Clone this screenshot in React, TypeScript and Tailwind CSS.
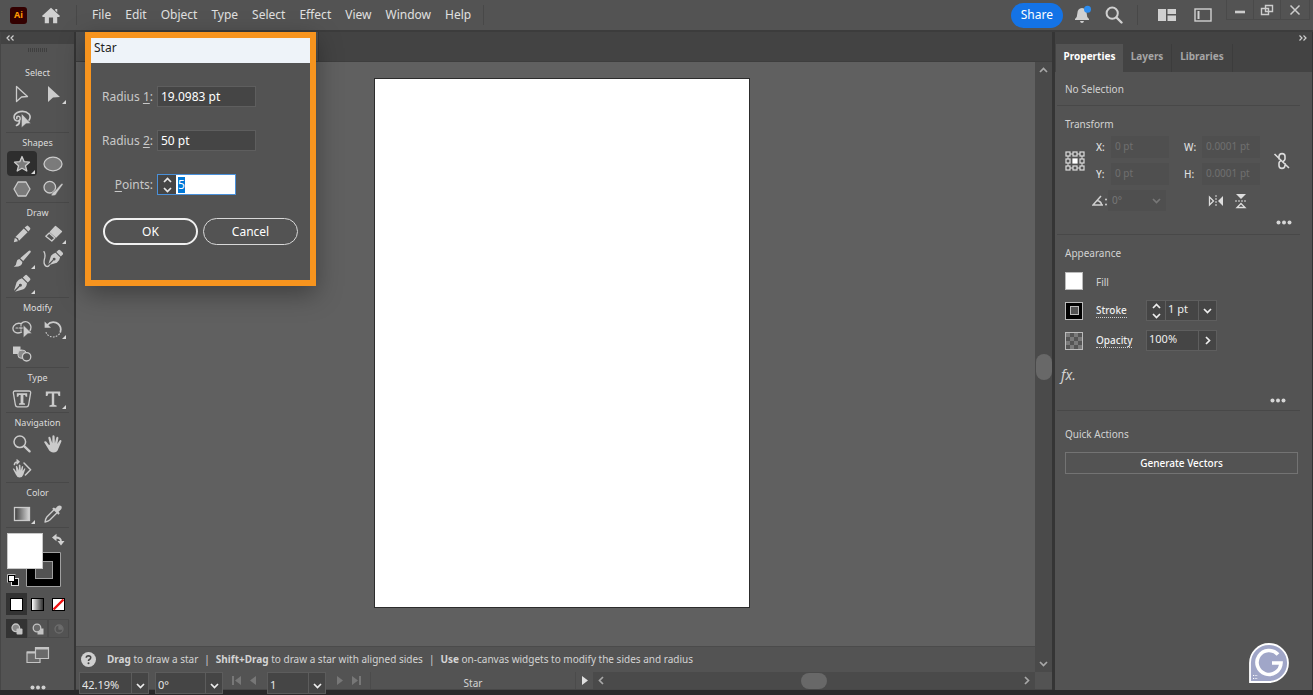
import { useEffect, useRef } from "react";
import type { ReactNode } from "react";

type IconProps = { children: ReactNode; size?: string; box?: string };

function Icon({ children, size = "size-5", box = "0 0 20 20" }: IconProps) {
  return (
    <svg
      viewBox={box}
      className={`${size} shrink-0`}
      fill="none"
      stroke="currentColor"
      strokeWidth="1.3"
      strokeLinejoin="round"
      strokeLinecap="round"
      aria-hidden="true"
    >
      {children}
    </svg>
  );
}

function Chevron({ dir, className = "" }: { dir: "up" | "down" | "left" | "right"; className?: string }) {
  const paths = {
    up: "M2 7 L5.5 3.5 L9 7",
    down: "M2 4 L5.5 7.5 L9 4",
    left: "M7 2 L3.5 5.5 L7 9",
    right: "M4 2 L7.5 5.5 L4 9",
  };
  return (
    <svg viewBox="0 0 11 11" className={`size-[11px] shrink-0 ${className}`} fill="none" stroke="currentColor" strokeWidth="1.7" aria-hidden="true">
      <path d={paths[dir]} />
    </svg>
  );
}

const nib = (
  <path d="M10.8 3.4 L13.2 1.2 Q14.2 .4 15.2 1.4 L18 4.2 Q18.9 5.2 18 6.2 L15.8 8.4 Z M9.9 4.2 L15 9.2 Q14.6 13.2 11.4 15.2 L3 17.8 L8 12.6 A1.5 1.5 0 1 0 7 11.6 L2 16.800 L4.600 8.200 Q6.400 5 9.900 4.200 Z" fill="currentColor" stroke="none" />
);

const tools = [
  {
    label: "Select",
    items: [
      { name: "Selection", icon: <path d="M4.500 2.500 L15.500 12.500 L9.500 13 L4.500 17.500 Z" /> },
      { name: "Direct Selection", more: true, icon: <path d="M5 2 L17 13 L10 13.400 L5 18 Z" fill="currentColor" stroke="none" /> },
      {
        name: "Lasso",
        icon: (
          <>
            <path d="M16.500 12 Q19.500 8 17 5 Q13.500 1.500 8 2.600 Q2 4 2 8.500 Q2.500 12 6 12 Q8.300 11.600 8.300 9.200 Q8 7 6 7.200 Q4.300 7.700 4.800 9.600 M7.500 11.500 Q8 15 4.500 16.500" strokeWidth="1.600" />
            <path d="M9.500 4.500 L19 14.500 L14 14.800 L9.500 18.800 Z" fill="currentColor" stroke="#535353" strokeWidth=".6" />
          </>
        ),
      },
    ],
  },
  {
    label: "Shapes",
    items: [
      { name: "Star", more: true, active: true, icon: <path d="M10 2.500 L12.200 7.700 L17.500 8.200 L13.500 11.800 L14.800 17 L10 14.200 L5.200 17 L6.500 11.800 L2.500 8.200 L7.800 7.700 Z" fill="#7b7b7b" /> },
      { name: "Ellipse", icon: <ellipse cx="10" cy="10" rx="9" ry="6.800" fill="#7b7b7b" /> },
      { name: "Polygon", icon: <path d="M6 3 H14 L18 10 L14 17 H6 L2 10 Z" fill="#7b7b7b" /> },
      {
        name: "Shaper",
        icon: (
          <>
            <circle cx="6.800" cy="8.200" r="5.800" fill="#6e6e6e" />
            <path d="M8 16.600 Q9.400 12.500 12 11.800 L18.200 4.800 Q19.800 4 20 5.600 L14 13.800 Q13 17.600 8 16.600 Z" fill="currentColor" stroke="#535353" strokeWidth=".5" />
          </>
        ),
      },
    ],
  },
  {
    label: "Draw",
    items: [
      { name: "Pencil", icon: <path d="M12.600 3.600 L14.600 1.900 Q15.400 1.300 16.200 2 L18 3.800 Q18.700 4.600 18.100 5.400 L16.400 7.400 Z M11.800 4.400 L15.600 8.200 L7 16.800 L6 14.200 L3.400 13 Z M2.800 14 L4.900 15 L5.900 17.200 L1.800 18.300 Z" fill="currentColor" stroke="none" /> },
      {
        name: "Eraser",
        more: true,
        icon: (
          <>
            <path d="M12.500 2.500 L18.500 7.500 L13 13 L7.400 8 Z" fill="currentColor" />
            <path d="M6.200 9 L11.800 14 L8.800 17 L2.800 12.200 Z" />
          </>
        ),
      },
      { name: "Paintbrush", more: true, icon: <path d="M18.400 1.800 Q19.200 2.600 18.400 3.600 L11.200 12 L8.200 9.200 L16.600 1.900 Q17.600 1.200 18.400 1.800 Z M7.300 10 L10.400 13 Q10.400 18.200 1.800 17.800 Q4.600 16.300 4.400 13.400 Q4.800 10.400 7.300 10 Z" fill="currentColor" stroke="none" /> },
      {
        name: "Curvature",
        icon: (
          <>
            <g transform="translate(3.600 0) scale(.9)">{nib}</g>
            <path d="M1 2.600 Q2.600 5.500 1.700 9 Q-.2 15.600 3.400 17.400 Q5.600 17.800 6.400 16" />
          </>
        ),
      },
      { name: "Pen", more: true, icon: nib },
    ],
  },
  {
    label: "Modify",
    items: [
      {
        name: "Shape Builder",
        icon: (
          <>
            <path d="M9 4.800 Q12 1.600 15.400 3 Q18.600 4.600 19 8 Q19 11 17.400 12.400 M9.500 13.200 Q5 15 2.400 12.800 Q-.2 10 1.800 6.800 Q4.600 3.200 9.600 4.700" />
            <path d="M4 9 H11.500 M9 5.500 V12" strokeDasharray="1.600 1.400" strokeWidth="1.100" />
            <path d="M11.400 6 L20 14.400 L15.800 14.800 L11.400 18.800 Z" fill="currentColor" stroke="#535353" strokeWidth=".6" />
          </>
        ),
      },
      {
        name: "Rotate",
        more: true,
        icon: (
          <>
            <path d="M4 6.200 Q8 1.800 13 3.600 Q17.600 5.600 17.800 10.400 L17.400 13" strokeWidth="1.700" />
            <path d="M1.600 2.400 V8.800 H8 Z" fill="currentColor" stroke="none" />
            <path d="M16.400 15 Q12 19.200 7 17.400 Q3 15.400 2.600 11.400" strokeDasharray=".8 2.200" strokeWidth="1.100" />
          </>
        ),
      },
      {
        name: "Blend",
        icon: (
          <>
            <path d="M1 2.500 H8.500 V10 H1 Z" fill="currentColor" stroke="none" />
            <rect x="6" y="6.200" width="8" height="8" rx="3" fill="#8b8b8b" strokeWidth="1" />
            <circle cx="14.600" cy="12.800" r="4.200" fill="#535353" />
          </>
        ),
      },
    ],
  },
  {
    label: "Type",
    items: [
      {
        name: "Touch Type",
        icon: (
          <>
            <path d="M3 2 H17 Q19 2 18.600 4.200 L16.600 16 Q16.200 17.800 14.600 17.800 H5.400 Q3.800 17.800 3.400 16 L1.400 4.200 Q1 2 3 2 Z" />
            <path d="M4.800 4.200 H15.200 V7.800 H13.800 L13 6 H11.400 V14 L13 14.600 V15.800 H7 V14.600 L8.600 14 V6 H7 L6.200 7.800 H4.800 Z" fill="currentColor" stroke="none" />
          </>
        ),
      },
      { name: "Type", more: true, icon: <path d="M2.800 2.500 H17.200 V7 H15.600 L14.600 4.400 H11.200 V15.800 L13.600 16.500 V17.800 H6.400 V16.500 L8.800 15.800 V4.400 H5.400 L4.400 7 H2.800 Z" fill="currentColor" stroke="none" /> },
    ],
  },
  {
    label: "Navigation",
    items: [
      {
        name: "Zoom",
        icon: (
          <>
            <circle cx="7.800" cy="7.800" r="5.800" strokeWidth="1.500" />
            <path d="M12.400 12.400 L17.600 17.400" strokeWidth="2.300" />
          </>
        ),
      },
      {
        name: "Hand",
        icon: (
          <path d="M6 11 L3.200 7.600 Q2.200 6.800 1.400 7.400 Q.9 8 1.500 8.800 L5.200 14.800 Q7 18.600 10.500 18.600 Q14.400 18.400 15.400 14.600 L18.400 7.400 Q18.700 6.400 17.800 6 Q17 5.800 16.500 6.600 L14.300 10 L15.400 4.200 Q15.500 3 14.600 2.800 Q13.600 2.700 13.300 3.800 L11.900 9.200 L11.600 2.400 Q11.400 1.300 10.400 1.300 Q9.400 1.400 9.400 2.500 L9.300 9.200 L7.400 3.600 Q7 2.600 6 2.800 Q5.200 3.200 5.400 4.200 L7 10.600 Z" fill="currentColor" stroke="none" />
        ),
      },
      {
        name: "Rotate View",
        icon: (
          <>
            <path d="M4.400 13 L2.200 9.800 Q1.200 9 .8 9.800 L3.800 15.400 Q5 18.400 7.600 18.400 Q10.600 18.200 11.400 15.400 L13.400 9.800 Q13.200 8.800 12.400 9.400 L10.600 12 L11.200 7.600 Q10.600 6.400 9.800 7.600 L8.800 11.400 L8.400 6 Q7.600 5 6.800 6 L6.900 11.600 L5.200 7.200 Q4.400 6.400 3.800 7.400 Z" fill="currentColor" stroke="none" />
            <path d="M12 4 L18.600 10.800 L13.400 16 M2.400 5.600 Q2.600 3 6.400 2.800 M5 1 L7 2.800 L5 4.800" strokeWidth="1.500" />
          </>
        ),
      },
    ],
  },
  {
    label: "Color",
    items: [
      {
        name: "Gradient",
        more: true,
        icon: (
          <>
            <defs>
              <linearGradient id="tool-grad">
                <stop stopColor="#3c3c3c" />
                <stop offset="1" stopColor="#d8d8d8" />
              </linearGradient>
            </defs>
            <rect x="2.500" y="3.500" width="15" height="13" fill="url(#tool-grad)" strokeLinejoin="miter" />
          </>
        ),
      },
      {
        name: "Eyedropper",
        icon: (
          <>
            <path d="M10.800 6 L3.800 13 Q2.600 14.600 2 18 Q5.400 17.400 6.800 16 L13.800 9" />
            <path d="M9.200 4.800 L10.800 3.400 L12.400 4.600 L14.800 2 Q16.600 .8 18.200 2 Q19.400 3.600 18 5.400 L15.600 7.800 L16.800 9.200 L15.400 10.800 Z" fill="currentColor" stroke="none" />
          </>
        ),
      },
    ],
  },
];

const menus = ["File", "Edit", "Object", "Type", "Select", "Effect", "View", "Window", "Help"];

type Tool = { name: string; icon: ReactNode; more?: boolean; active?: boolean };

function ToolButton({ name, icon, more, active }: Tool) {
  return (
    <button
      type="button"
      aria-label={name}
      className={`relative flex h-[25px] w-[30px] items-center justify-center text-[#cbcbcb] ${active ? "rounded-sm bg-[#2e2e2e]" : ""}`}
    >
      <Icon>{icon}</Icon>
      {more && (
        <svg viewBox="0 0 4 4" className="absolute right-0.5 bottom-0.5 size-1" aria-hidden="true">
          <path d="M4 0 V4 H0 Z" fill="#d8d8d8" />
        </svg>
      )}
    </button>
  );
}

function Toolbar() {
  return (
    <aside className="flex w-[76px] shrink-0 flex-col overflow-hidden border-r-2 border-l border-r-[#353535] border-l-[#464646] bg-[#535353]">
      <div className="flex h-3 shrink-0 items-center bg-[#434343] px-1 text-[#d0d0d0]">
        <button type="button" aria-label="Collapse tools" className="flex">
          <svg viewBox="0 0 10 8" className="h-2 w-2.5" fill="none" stroke="currentColor" strokeWidth="1.2"><path d="M4.500 1.500 L2 4 L4.500 6.500 M8.500 1.500 L6 4 L8.500 6.500" /></svg>
        </button>
      </div>
      <div className="flex h-[19px] shrink-0 justify-center pt-1">
        <svg viewBox="0 0 20 4" className="h-1 w-5" aria-hidden="true"><path d="M0 2 H20" stroke="#3f3f3f" strokeWidth="4" strokeDasharray="1 1" /></svg>
      </div>
      {tools.map((group) => (
        <section key={group.label} className="mx-[5px] border-b border-[#484848] pb-px">
          <h2 className="h-[18px] pt-0.5 text-center text-[9px] leading-4 text-[#dcdcdc]">{group.label}</h2>
          <div className="grid grid-cols-2 justify-items-center">
            {group.items.map((t: Tool) => (
              <ToolButton key={t.name} {...t} />
            ))}
          </div>
        </section>
      ))}
      <button type="button" aria-label="Fill and stroke" className="mt-[5px] ml-1.5 shrink-0">
        <svg viewBox="0 0 58 56" className="h-14 w-[58px]" aria-hidden="true">
          <path d="M19.500 19.500 H53.500 V53.500 H19.500 Z" fill="#000" stroke="#a0a0a0" />
          <rect x="28.500" y="28.500" width="17" height="17" fill="#535353" stroke="#a0a0a0" />
          <rect x=".5" y=".5" width="35" height="35" fill="#fff" stroke="#c8c8c8" />
          <path d="M48.500 4.500 Q54 4.500 54 8.500" fill="none" stroke="#d0d0d0" strokeWidth="1.800" />
          <path d="M45 4.500 L49.500 .8 V8.200 Z M50.500 8 H57.500 L54 12.500 Z" fill="#d0d0d0" />
          <rect x="4.500" y="45.500" width="7" height="7" fill="#000" stroke="#ddd" />
          <rect x="1.500" y="42.500" width="6" height="6" fill="#fff" stroke="#000" />
          <path d="M.5 49.500 V41.500 H8.500" fill="none" stroke="#bbb" />
        </svg>
      </button>
      <div className="mx-[5px] mt-1 grid shrink-0 grid-cols-3">
        <button type="button" aria-label="Solid color" className="flex h-[22px] items-center justify-center bg-[#333333]"><span className="size-[13px] border border-black bg-white" /></button>
        <button type="button" aria-label="Gradient fill" className="flex h-[22px] items-center justify-center"><span className="size-[13px] border border-black bg-linear-to-r from-white to-[#333333]" /></button>
        <button type="button" aria-label="No fill" className="flex h-[22px] items-center justify-center">
          <svg viewBox="0 0 13 13" className="size-[13px]"><rect x=".5" y=".5" width="12" height="12" fill="#fff" stroke="#000" /><path d="M1.500 11.500 L11.500 1.500" stroke="#f01010" strokeWidth="2.400" /></svg>
        </button>
      </div>
      <div className="mx-[5px] mt-1 grid shrink-0 grid-cols-3 text-[#c4c4c4]">
        <button type="button" aria-label="Draw normal" className="flex h-[19px] items-center justify-center bg-[#333333]">
          <Icon size="size-3" box="0 0 12 12"><circle cx="4.800" cy="4.800" r="3.800" fill="#888" /><rect x="5.500" y="5.500" width="6" height="6" fill="currentColor" stroke="none" rx="1" /></Icon>
        </button>
        <button type="button" aria-label="Draw behind" className="flex h-[19px] items-center justify-center border border-[#4a4a4a]">
          <Icon size="size-3" box="0 0 12 12"><rect x="5.500" y="5.500" width="6" height="6" fill="currentColor" stroke="none" /><circle cx="5" cy="5" r="3.800" fill="#6a6a6a" /></Icon>
        </button>
        <button type="button" aria-label="Draw inside" disabled className="flex h-[19px] items-center justify-center border border-[#4a4a4a] text-[#6c6c6c]">
          <Icon size="size-3" box="0 0 12 12"><circle cx="6" cy="6" r="4" /><path d="M6 6 V3 A3 3 0 0 1 9 6 Z" fill="currentColor" /></Icon>
        </button>
      </div>
      <button type="button" aria-label="Screen mode" className="mt-2 flex shrink-0 justify-center text-[#c4c4c4]">
        <svg viewBox="0 0 24 18" className="h-[18px] w-6" fill="#6a6a6a" stroke="currentColor" strokeWidth="1.200"><path d="M1 6 H14 V16.500 H1 Z" /><path d="M9.500 1.500 H22.500 V12.500 H9.500 Z" /><path d="M9 2.500 H23 M1 6.500 H9" strokeWidth="2" /></svg>
      </button>
      <button type="button" aria-label="Edit toolbar" className="mt-[21px] flex shrink-0 justify-center text-[#d0d0d0]"><Dots /></button>
    </aside>
  );
}

function Dots() {
  return (
    <svg viewBox="0 0 16 5" className="h-[5px] w-4" fill="currentColor" aria-hidden="true"><circle cx="2.500" cy="2.500" r="2" /><circle cx="8" cy="2.500" r="2" /><circle cx="13.500" cy="2.500" r="2" /></svg>
  );
}

function Header() {
  return (
    <header className="flex h-8 shrink-0 items-center border-b-2 border-[#3c3c3c] bg-[#535353] text-[#e0e0e0]">
      <div className="flex w-[76px] items-center gap-3.5 pl-2.5">
        <span className="flex size-[17px] items-center justify-center rounded-[3px] bg-[#330000] text-[9px] font-bold text-[#ff9a00]">Ai</span>
        <button type="button" aria-label="Home" className="flex">
          <svg viewBox="0 0 20 18" className="h-[17px] w-5" fill="#d0d0d0"><path d="M10 .8 L19.600 9.400 L18.500 10.600 H16.600 V17.200 H12.200 V11 H7.800 V17.200 H3.400 V10.600 H1.500 L.4 9.400 Z M14.500 2 H16.600 V5.600 L14.500 3.800 Z" /></svg>
        </button>
      </div>
      <nav className="flex items-center gap-3.5 border-x border-[#484848] pr-3 pl-[15px] text-xs leading-5">
        {menus.map((m) => (
          <button key={m} type="button">{m}</button>
        ))}
      </nav>
      <div className="ml-auto flex items-center self-stretch">
        <button type="button" className="h-[25px] rounded-full bg-[#1473e6] px-2.5 text-xs text-white">Share</button>
        <button type="button" aria-label="Notifications" className="ml-2.5 flex">
          <svg viewBox="0 0 20 20" className="size-5"><path d="M9 3 Q13.400 3.400 13.600 8 Q13.600 12 16 14 V15 H2 V14 Q4.400 12 4.400 8 Q4.600 3.400 9 3 Z M7 16 H11 Q10.600 18 9 18 Q7.400 18 7 16 Z" fill="#d0d0d0" /><circle cx="14.500" cy="4.200" r="3.500" fill="#2b8cf0" /></svg>
        </button>
        <button type="button" aria-label="Search" className="ml-3 flex text-[#d0d0d0]">
          <svg viewBox="0 0 18 18" className="size-[18px]" fill="none" stroke="currentColor" strokeLinecap="round"><circle cx="7.200" cy="7.200" r="5.600" strokeWidth="2" /><path d="M11.500 11.500 L16.500 16.500" strokeWidth="2.400" /></svg>
        </button>
        <span className="ml-3.5 h-5 w-px bg-[#484848]" />
        <button type="button" aria-label="Arrange documents" className="ml-5 flex">
          <svg viewBox="0 0 18 12" className="h-3 w-[18px]" fill="#d0d0d0"><path d="M0 0 H8 V12 H0 Z M9.500 0 H18 V5 H9.500 Z M9.500 6.500 H18 V12 H9.500 Z" /></svg>
        </button>
        <button type="button" aria-label="Workspace" className="ml-[18px] flex">
          <svg viewBox="0 0 18 14" className="h-3.5 w-[18px]" fill="none" stroke="#d0d0d0" strokeWidth="1.400"><rect x="1" y="1" width="16" height="12" /><path d="M4.500 3 V11" strokeWidth="2" /></svg>
        </button>
        <div className="mr-[3px] ml-3.5 flex h-5 self-start border border-t-0 border-[#4a4a4a] text-[#cccccc]">
          <button type="button" aria-label="Minimize" className="flex w-[26px] items-center justify-center"><svg viewBox="0 0 12 12" className="size-3"><path d="M1 8 H11" stroke="currentColor" strokeWidth="2.600" /></svg></button>
          <button type="button" aria-label="Restore" className="flex w-7 items-center justify-center border-x border-[#4a4a4a]"><svg viewBox="0 0 14 12" className="h-3 w-3.5" fill="none" stroke="currentColor" strokeWidth="1.400"><path d="M5.500 1.500 H12.500 V7.500 H5.500 Z" /><path d="M1.500 4.500 H8.500 V10.500 H1.500 Z" /></svg></button>
          <button type="button" aria-label="Close" className="flex w-7 items-center justify-center"><svg viewBox="0 0 12 12" className="size-3" fill="none" stroke="currentColor" strokeWidth="1.500"><path d="M1.500 1.500 L10.500 10.500 M10.500 1.500 L1.500 10.500" /></svg></button>
        </div>
      </div>
    </header>
  );
}

function Dialog() {
  const points = useRef<HTMLInputElement>(null);
  useEffect(() => {
    points.current?.focus();
    points.current?.select();
  }, []);
  const field = "h-[21px] w-[99px] border border-[#5e5e5e] bg-[#454545] px-[3px] text-xs text-white outline-none";
  return (
    <form
      role="dialog"
      aria-label="Star"
      onSubmit={(e) => e.preventDefault()}
      className="absolute top-0 left-[9px] z-10 h-[254px] w-[231px] border-[6px] border-[#f7941e] bg-[#535353] text-xs text-[#c8c8c8] shadow-[0_8px_24px_rgba(0,0,0,0.35)]"
    >
      <h1 className="h-[25px] bg-[#eef3f9] pl-[3px] leading-5 text-[#222222]">Star</h1>
      <div className="mt-[23px] flex flex-col gap-[23px]">
        <div className="flex items-center">
          <label htmlFor="radius1" className="w-[62px] text-right">Radius <u className="underline-offset-2">1</u>:</label>
          <input id="radius1" defaultValue="19.0983 pt" className={`ml-1 ${field}`} />
        </div>
        <div className="flex items-center">
          <label htmlFor="radius2" className="w-[62px] text-right">Radius <u className="underline-offset-2">2</u>:</label>
          <input id="radius2" defaultValue="50 pt" className={`ml-1 ${field}`} />
        </div>
        <div className="flex items-center">
          <label htmlFor="points" className="w-[62px] text-right"><u className="underline-offset-2">P</u>oints:</label>
          <div className="ml-1 flex h-[21px] border border-[#4a90d9]">
            <div className="flex w-[18px] flex-col items-center justify-center bg-[#454545] text-[#e8e8e8]">
              <button type="button" aria-label="Increase points" className="flex h-[9px] items-center"><Chevron dir="up" /></button>
              <button type="button" aria-label="Decrease points" className="flex h-[9px] items-center"><Chevron dir="down" /></button>
            </div>
            <input ref={points} id="points" defaultValue="5" className="w-[59px] bg-white px-0.5 text-xs text-black outline-none selection:bg-[#0078d7] selection:text-white" />
          </div>
        </div>
      </div>
      <div className="mt-[23px] flex gap-[5px] pl-3 text-white">
        <button type="submit" className="h-[27px] w-[95px] rounded-full border-2 border-[#f0f0f0]">OK</button>
        <button type="button" className="h-[27px] w-[95px] rounded-full border border-[#d8d8d8]">Cancel</button>
      </div>
    </form>
  );
}

function Dropdown({ label, value, width }: { label: string; value: string; width: string }) {
  return (
    <div className={`grid h-full ${width} items-stretch`}>
      <select
        aria-label={label}
        className="col-start-1 row-start-1 appearance-none border border-[#5c5c5c] bg-[#454545] pt-1 pl-0.5 text-[11px] leading-4 text-[#e6e6e6] outline-none"
      >
        <option>{value}</option>
      </select>
      <span className="pointer-events-none col-start-1 row-start-1 flex w-[18px] items-center justify-center justify-self-end border-l border-[#5c5c5c] pt-1 text-[#eeeeee]">
        <Chevron dir="down" />
      </span>
    </div>
  );
}

function Workspace() {
  return (
    <main className="relative flex min-w-0 flex-1 flex-col bg-[#535353]">
      <Dialog />
      <div className="flex h-[30px] shrink-0 border-b border-[#3e3e3e] bg-[#434343]">
        <div className="w-[243px] border-r border-[#3a3a3a] bg-[#4f4f4f]" />
      </div>
      <div className="flex min-h-0 flex-1">
        <div className="flex min-w-0 flex-1 flex-col">
          <div className="flex flex-1 justify-center bg-[#606060] pt-4 pl-3">
            <div className="h-[530px] w-[376px] border border-[#2c2c2c] bg-white" />
          </div>
          <div className="flex h-[26px] shrink-0 items-center gap-[11px] border-t border-[#4b4b4b] pl-[5px] text-[10px] text-[#d4d4d4]">
            <svg viewBox="0 0 15 15" className="size-[15px]" aria-hidden="true"><circle cx="7.500" cy="7.500" r="7.500" fill="#cfcfcf" /><path d="M5.300 5.800 Q5.300 3.800 7.500 3.800 Q9.800 3.900 9.700 5.700 Q9.600 6.900 8.400 7.500 Q7.500 8 7.500 9" fill="none" stroke="#444" strokeWidth="1.600" /><circle cx="7.500" cy="11.200" r="1" fill="#444" /></svg>
            <p className="flex gap-1.5 whitespace-nowrap">
              <span><b>Drag</b> to draw a star</span>
              <span>|</span>
              <span><b>Shift+Drag</b> to draw a star with aligned sides</span>
              <span>|</span>
              <span><b>Use</b> on-canvas widgets to modify the sides and radius</span>
            </p>
          </div>
        </div>
        <div className="flex w-[17px] shrink-0 flex-col items-center bg-[#4a4a4a] py-[3px] text-[#a8a8a8]">
          <button type="button" aria-label="Scroll up"><Chevron dir="up" /></button>
          <div className="flex flex-1 items-center"><span className="h-[26px] w-4 rounded-full bg-[#686868]" /></div>
          <button type="button" aria-label="Scroll down"><Chevron dir="down" /></button>
        </div>
      </div>
      <div className="flex h-[18px] shrink-0 items-center border-b border-[#474747] pl-[3px] text-[11px]">
        <Dropdown label="Zoom level" value="42.19%" width="w-[70px]" />
        <span className="w-1.5" />
        <Dropdown label="Canvas rotation" value="0°" width="w-[68px]" />
        <div className="flex w-11 items-center justify-center gap-2 text-[#777777]">
          <button type="button" aria-label="First artboard"><svg viewBox="0 0 9 9" className="size-[9px]" fill="currentColor"><path d="M0 0 H2 V9 H0 Z M9 0 V9 L3 4.500 Z" /></svg></button>
          <button type="button" aria-label="Previous artboard"><svg viewBox="0 0 9 9" className="size-[9px]" fill="currentColor"><path d="M7 0 V9 L1 4.500 Z" /></svg></button>
        </div>
        <Dropdown label="Artboard" value="1" width="w-[59px]" />
        <div className="flex h-full w-[45px] items-center justify-center gap-2 border-r border-[#4b4b4b] text-[#777777]">
          <button type="button" aria-label="Next artboard"><svg viewBox="0 0 9 9" className="size-[9px]" fill="currentColor"><path d="M2 0 V9 L8 4.500 Z" /></svg></button>
          <button type="button" aria-label="Last artboard"><svg viewBox="0 0 9 9" className="size-[9px]" fill="currentColor"><path d="M7 0 H9 V9 H7 Z M0 0 V9 L6 4.500 Z" /></svg></button>
        </div>
        <span className="w-[204px] pt-1 text-center text-[10px] leading-[14px] text-[#d4d4d4]">Star</span>
        <button type="button" aria-label="Status options" className="flex h-full w-[18px] items-center justify-center border-l border-[#4b4b4b] text-[#e0e0e0]"><svg viewBox="0 0 9 9" className="size-[9px]" fill="currentColor"><path d="M2 0 V9 L8 4.500 Z" /></svg></button>
        <div className="flex h-full flex-1 items-center justify-between bg-[#4a4a4a] px-[3px] text-[#a8a8a8]">
          <button type="button" aria-label="Scroll left"><Chevron dir="left" /></button>
          <span className="h-4 w-[26px] rounded-full bg-[#686868]" />
          <button type="button" aria-label="Scroll right"><Chevron dir="right" /></button>
        </div>
        <span className="w-[17px]" />
      </div>
    </main>
  );
}

function DisabledField({ id, label, value, labelWidth }: { id: string; label: string; value: string; labelWidth: string }) {
  return (
    <div className="flex items-center">
      <label htmlFor={id} className={`${labelWidth} font-medium text-[#dddddd]`}>{label}</label>
      <input id={id} disabled defaultValue={value} className="h-[22px] w-[58px] bg-[#4f4f4f] px-1 pb-0.5 text-[10px] text-[#6f6f6f]" />
    </div>
  );
}

function Panel() {
  return (
    <aside className="flex w-[261px] shrink-0 flex-col border-r border-l-[3px] border-r-[#333333] border-l-[#353535] bg-[#535353] text-[10px] text-[#d2d2d2]">
      <div className="flex h-3 shrink-0 items-center justify-end bg-[#434343] pr-1 text-[#d0d0d0]">
        <button type="button" aria-label="Collapse panels" className="flex"><svg viewBox="0 0 10 8" className="h-2 w-2.5" fill="none" stroke="currentColor" strokeWidth="1.200"><path d="M1.500 1.500 L4 4 L1.500 6.500 M5.500 1.500 L8 4 L5.500 6.500" /></svg></button>
      </div>
      <div role="tablist" className="flex h-7 shrink-0 bg-[#434343] pl-px text-[10px] font-bold text-[#a6a6a6]">
        <button type="button" role="tab" aria-selected="true" className="w-[67px] bg-[#535353] pb-1 text-white">Properties</button>
        <button type="button" role="tab" aria-selected="false" className="w-[49px] border-r border-[#3c3c3c] pb-1">Layers</button>
        <button type="button" role="tab" aria-selected="false" className="w-[61px] border-r border-[#3c3c3c] pb-1">Libraries</button>
      </div>
      <div className="mr-3 ml-0.5 border-b border-[#484848] px-2 pt-[9px] pb-2 leading-4">No Selection</div>
      <section className="mr-3 ml-0.5 h-[129px] border-b border-[#484848] px-2 pt-2.5">
        <h2 className="leading-4">Transform</h2>
        <div className="mt-1 flex">
          <div className="flex h-[49px] w-[31px] items-center">
            <button type="button" aria-label="Reference point">
              <svg viewBox="0 0 20 20" className="size-5" fill="none" stroke="#dcdcdc" strokeWidth="1.200">
                <path d="M5 3 H15 M5 17 H15 M3 5 V15 M17 5 V15" strokeWidth="1" />
                <g fill="#535353">
                  <rect x="1" y="1" width="4" height="4" /><rect x="8" y="1" width="4" height="4" /><rect x="15" y="1" width="4" height="4" />
                  <rect x="1" y="8" width="4" height="4" /><rect x="15" y="8" width="4" height="4" />
                  <rect x="1" y="15" width="4" height="4" /><rect x="8" y="15" width="4" height="4" /><rect x="15" y="15" width="4" height="4" />
                </g>
                <rect x="8" y="8" width="4" height="4" fill="#fff" stroke="#fff" />
              </svg>
            </button>
          </div>
          <div className="flex flex-col gap-[5px]">
            <DisabledField id="tx" label="X:" value="0 pt" labelWidth="w-[15px]" />
            <DisabledField id="ty" label="Y:" value="0 pt" labelWidth="w-[15px]" />
            <div className="-ml-1 flex h-[21px] items-center">
              <svg viewBox="0 0 16 12" className="h-3 w-4 shrink-0" aria-hidden="true"><path d="M9 1 L1 10 H11 M5 5.500 Q9.500 6.500 9.500 10" fill="none" stroke="#cfcfcf" strokeWidth="1.500" /><circle cx="14" cy="4.500" r="1" fill="#cfcfcf" /><circle cx="14" cy="9.500" r="1" fill="#cfcfcf" /></svg>
              <div className="grid h-[21px] w-[58px]">
                <select aria-label="Rotation" disabled className="col-start-1 row-start-1 appearance-none bg-[#4f4f4f] px-1 text-[#777777] opacity-100"><option>0°</option></select>
                <span className="pointer-events-none col-start-1 row-start-1 flex items-center justify-end pr-1 text-[#777777]"><Chevron dir="down" /></span>
              </div>
            </div>
          </div>
          <div className="ml-[15px] flex flex-col gap-[5px]">
            <DisabledField id="tw" label="W:" value="0.0001 pt" labelWidth="w-[18px]" />
            <DisabledField id="th" label="H:" value="0.0001 pt" labelWidth="w-[18px]" />
            <div className="flex h-[21px] items-center gap-2.5 pl-6 text-[#dddddd]">
              <button type="button" aria-label="Flip horizontal"><svg viewBox="0 0 16 14" className="h-3.5 w-4"><path d="M1.500 3 V11 L5.500 7 Z" fill="none" stroke="currentColor" strokeWidth="1.300" /><path d="M15 2 V12 L10 7 Z" fill="currentColor" /><path d="M8 1 V13" stroke="currentColor" strokeDasharray="2 1" /></svg></button>
              <button type="button" aria-label="Flip vertical"><svg viewBox="0 0 14 16" className="h-4 w-3.5"><path d="M2 1 H12 L7 6 Z" fill="currentColor" /><path d="M3 14.500 H11 L7 10.500 Z" fill="none" stroke="currentColor" strokeWidth="1.300" /><path d="M1 8 H13" stroke="currentColor" strokeDasharray="2 1" /></svg></button>
            </div>
          </div>
          <div className="flex h-[49px] flex-1 items-center justify-end pr-px">
            <button type="button" aria-label="Constrain proportions"><svg viewBox="0 0 18 20" className="h-5 w-[18px]" fill="none" stroke="#dcdcdc" strokeWidth="1.600"><path d="M6 8.500 V5.500 Q6.200 2.600 9 2.600 Q12 2.600 12 5.500 V8 Q11.600 10 10 10.400 M12 12 V14.500 Q11.800 17.400 9 17.400 Q6 17.400 6 14.500 V12 Q6.300 10.200 8 9.800 M1.500 3 L16 17" /></svg></button>
          </div>
        </div>
        <div className="mt-[9px] flex justify-end pr-0 text-[#d6d6d6]"><button type="button" aria-label="More transform options" className="flex"><Dots /></button></div>
      </section>
      <section className="mr-3 ml-0.5 h-44 border-b border-[#484848] px-2 pt-2.5">
        <h2 className="leading-4">Appearance</h2>
        <div className="mt-[9px] grid grid-cols-[31px_50px_1fr] items-center gap-y-[9px]">
          <button type="button" aria-label="Fill color" className="size-[18px] border border-[#bbbbbb] bg-white" />
          <span className="h-[21px] pt-1 leading-4">Fill</span>
          <span />
          <button type="button" aria-label="Stroke color" className="flex size-[18px] items-center justify-center border border-[#bbbbbb] bg-black"><span className="size-[9px] border border-[#bbbbbb] bg-[#535353]" /></button>
          <a href="#stroke" className="w-fit border-b border-dotted border-[#cccccc] leading-[14px] font-medium text-[#eeeeee]">Stroke</a>
          <div className="flex h-[21px] w-[71px] border border-[#5e5e5e] bg-[#454545] text-[#eeeeee]">
            <div className="flex w-[18px] flex-col items-center justify-center">
              <button type="button" aria-label="Increase stroke" className="flex h-[9px] items-center"><Chevron dir="up" /></button>
              <button type="button" aria-label="Decrease stroke" className="flex h-[9px] items-center"><Chevron dir="down" /></button>
            </div>
            <input aria-label="Stroke weight" defaultValue="1 pt" className="w-[34px] border-x border-[#5e5e5e] px-0.5 pb-0.5 text-[11px] outline-none" />
            <button type="button" aria-label="Stroke presets" className="flex flex-1 items-center justify-center"><Chevron dir="down" /></button>
          </div>
          <button type="button" aria-label="Opacity mask" className="size-[18px]">
            <svg viewBox="0 0 18 18" className="size-[18px]"><rect x=".5" y=".5" width="17" height="17" fill="#555" stroke="#bbb" /><path d="M1 1 H5 V5 H1 Z M9 1 H13 V5 H9 Z M5 5 H9 V9 H5 Z M13 5 H17 V9 H13 Z M1 9 H5 V13 H1 Z M9 9 H13 V13 H9 Z M5 13 H9 V17 H5 Z M13 13 H17 V17 H13 Z" fill="#7a7a7a" /></svg>
          </button>
          <a href="#opacity" className="w-fit border-b border-dotted border-[#cccccc] leading-[14px] font-medium text-[#eeeeee]">Opacity</a>
          <div className="flex h-[21px] w-[71px] border border-[#5e5e5e] bg-[#454545] text-[#eeeeee]">
            <input aria-label="Opacity value" defaultValue="100%" className="w-[52px] border-r border-[#5e5e5e] px-0.5 pb-0.5 text-[11px] outline-none" />
            <button type="button" aria-label="Opacity slider" className="flex flex-1 items-center justify-center"><Chevron dir="right" /></button>
          </div>
        </div>
        <button type="button" aria-label="Effects" className="mt-3.5 -ml-1 block text-[14px] leading-5 italic">fx.</button>
        <div className="mt-[13px] flex justify-end pr-1.5 text-[#d6d6d6]"><button type="button" aria-label="More appearance options" className="flex"><Dots /></button></div>
      </section>
      <section className="mr-3 ml-0.5 pt-[15px] pr-0.5 pl-2">
        <h2 className="leading-4">Quick Actions</h2>
        <button type="button" className="mt-2.5 h-[22px] w-full border border-[#737373] text-[10px] font-medium text-white">Generate Vectors</button>
      </section>
      <div className="mt-auto flex justify-end pr-[22px] pb-1.5">
        <button type="button" aria-label="Writing assistant" className="flex">
          <svg viewBox="0 0 42 42" className="size-[42px]">
            <path d="M21 2 A19 19 0 1 1 21 40 H2 V21 A19 19 0 0 1 21 2 Z" fill="#a0a6c8" stroke="#fff" strokeWidth="1.800" />
            <path d="M30 12.500 A12 12 0 1 0 33 21 H24" fill="none" stroke="#fff" strokeWidth="3.600" />
            <path d="M5 33.500 H10 M5 36.500 H10" stroke="#fff" strokeWidth="1.200" strokeDasharray="1.200 1.200" />
          </svg>
        </button>
      </div>
    </aside>
  );
}

export default function App() {
  return (
    <div className="flex h-screen flex-col overflow-hidden bg-[#535353] font-['Noto_Sans',sans-serif]">
      <Header />
      <div className="flex min-h-0 flex-1">
        <Toolbar />
        <Workspace />
        <Panel />
      </div>
      <div className="h-[5px] shrink-0 bg-[#2a2829]" />
    </div>
  );
}
